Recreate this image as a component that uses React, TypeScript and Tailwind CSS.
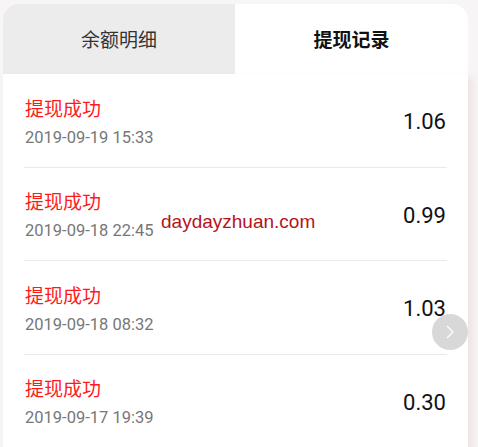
import React from "react";

const rows = [
  { date: "2019-09-19 15:33", amount: "1.06" },
  { date: "2019-09-18 22:45", amount: "0.99" },
  { date: "2019-09-18 08:32", amount: "1.03" },
  { date: "2019-09-17 19:39", amount: "0.30" },
];

export default function App() {
  const cjk = { fontFamily: '"Noto Sans CJK SC", "Noto Sans", sans-serif' };
  const num = { fontFamily: 'Roboto, "Noto Sans", sans-serif' };
  return (
    <div className="relative w-[478px] h-[447px] overflow-hidden bg-[#f7f5f5]">
      <div className="ml-[3px] mr-[10px] pt-[4px] flex flex-col h-full">
        <div className="flex h-[71px]" style={cjk}>
          <div className="w-[232px] bg-[#ececec] rounded-tl-[16px] flex items-center justify-center text-[19px] text-[#333]">
            余额明细
          </div>
          <div className="flex-1 bg-white rounded-tr-[16px] flex items-center justify-center text-[19px] font-bold text-[#111]">
            提现记录
          </div>
        </div>
        <div className="flex-1 bg-white shadow-[4px_4px_8px_rgba(200,120,120,0.16)]">
          {rows.map((r, i) => (
            <div key={i} className="mx-[21px]">
              <div className="h-[92.5px] flex items-center justify-between pl-[1px] pr-[1px]">
                <div className="flex flex-col pt-[4px]">
                  <div className="text-[19px] leading-[26px] text-[#ff1a1a]" style={cjk}>
                    提现成功
                  </div>
                  <div className="mt-[5px] text-[16.5px] leading-[24px] text-[#777]" style={num}>
                    {r.date}
                  </div>
                </div>
                <div className="text-[22px] leading-[28px] text-[#111] mt-[4px]" style={num}>
                  {r.amount}
                </div>
              </div>
              {i < rows.length - 1 && <div className="h-px bg-[#e9e9e9]" />}
            </div>
          ))}
        </div>
      </div>
      <div
        className="absolute left-[161px] top-[211px] text-[19px] leading-[22px] text-[#b3141c]"
        style={{ fontFamily: '"Liberation Sans", Arial, sans-serif' }}
      >
        daydayzhuan.com
      </div>
      <div className="absolute left-[432px] top-[314px] w-[36px] h-[36px] rounded-full bg-[#d4d4d4]/90 flex items-center justify-center">
        <svg width="12" height="16" viewBox="0 0 12 16" fill="none">
          <path d="M3 2l6 6-6 6" stroke="white" strokeWidth="1.2" />
        </svg>
      </div>
    </div>
  );
}
